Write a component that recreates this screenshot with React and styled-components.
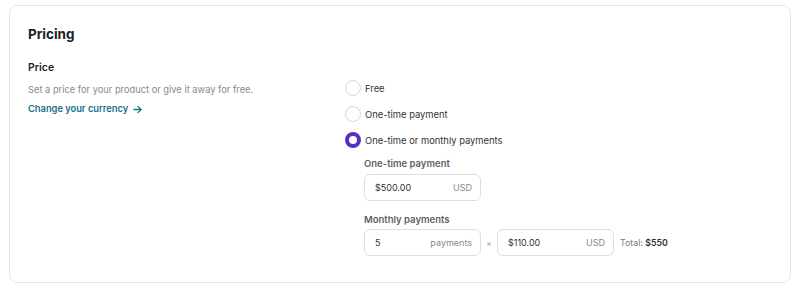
import React, { useState } from "react";
import styled, { createGlobalStyle } from "styled-components";

const GlobalStyle = createGlobalStyle`
  html, body {
    margin: 0;
    padding: 0;
    background: #fff;
    font-family: Inter, "Noto Sans", sans-serif;
    -webkit-font-smoothing: antialiased;
  }
  * { box-sizing: border-box; }
`;

// ----- Styled Components -----
const Card = styled.section`
  margin: 5px 9px 8px 9px;
  border: 1px solid #e4e4e4;
  border-radius: 8px;
  padding: 17px 18px 26px 18px;
  background: #fff;
`;

const Title = styled.h2`
  margin: 0;
  font-size: 13.5px;
  line-height: 22px;
  font-weight: 700;
  color: #1d2125;
`;

const Section = styled.div`
  margin-top: 14px;
  display: grid;
  grid-template-columns: 317px 1fr;
`;

const SectionInfo = styled.div`
  display: flex;
  flex-direction: column;
`;

const SectionTitle = styled.h3`
  margin: 0;
  font-size: 10.5px;
  line-height: 18px;
  font-weight: 600;
  color: #1d2125;
`;

const Description = styled.p`
  margin: 4px 0 0;
  font-size: 9.3px;
  line-height: 18px;
  color: #8a8a8a;
`;

const LinkRow = styled.div`
  margin-top: -3px;
`;

const Link = styled.a`
  font-size: 9.3px;
  line-height: 18px;
  font-weight: 600;
  color: #1a6e8e;
  text-decoration: none;
  display: inline-flex;
  align-items: center;
  gap: 5px;
`;

const Options = styled.div`
  margin-top: 16px;
  display: flex;
  flex-direction: column;
`;

const OptionRow = styled.label`
  display: flex;
  align-items: center;
  gap: 4px;
  height: 26px;
  flex-shrink: 0;
  font-size: 9.4px;
  color: #333;
  cursor: pointer;
`;

const Radio = styled.span`
  width: 16px;
  height: 16px;
  border-radius: 50%;
  border: ${(p) => (p.$checked ? "4px solid #5a2dc4" : "1px solid #d8d8d8")};
  background: #fff;
  flex-shrink: 0;
`;

const Nested = styled.div`
  padding-left: 19px;
  display: flex;
  flex-direction: column;
`;

const FieldLabel = styled.div`
  font-size: 9.5px;
  line-height: 14px;
  font-weight: 600;
  color: #5f5f5f;
  margin-top: ${(p) => p.$top}px;
  margin-bottom: ${(p) => p.$bottom}px;
`;

const FieldRow = styled.div`
  display: flex;
  align-items: center;
`;

const InputBox = styled.div`
  width: 117px;
  height: 27px;
  border: 1px solid #dedede;
  border-radius: 6px;
  display: flex;
  align-items: center;
  justify-content: space-between;
  padding: 0 8px 0 10px;
  font-size: 9px;
  color: #333;
`;

const Suffix = styled.span`
  color: #8a8a8a;
`;

const Times = styled.span`
  width: 16px;
  text-align: center;
  font-size: 8px;
  color: #999;
`;

const Total = styled.span`
  margin-left: 6px;
  font-size: 8.8px;
  color: #7a7a7a;

  b {
    font-weight: 600;
    color: #333;
  }
`;

const ArrowIcon = () => (
  <svg width="9" height="9" viewBox="0 0 10 10" fill="none" stroke="#1a6e8e" strokeWidth="1.4" strokeLinecap="round" strokeLinejoin="round">
    <path d="M1 5h8M5.5 1.5L9 5 5.5 8.5" />
  </svg>
);

const options = ["Free", "One-time payment", "One-time or monthly payments"];

// ----- Component -----
export default function App() {
  const [selected, setSelected] = useState(2);

  return (
    <>
      <GlobalStyle />
      <Card>
        <Title>Pricing</Title>
        <Section>
          <SectionInfo>
            <SectionTitle>Price</SectionTitle>
            <Description>Set a price for your product or give it away for free.</Description>
            <LinkRow>
              <Link href="#">
                Change your currency <ArrowIcon />
              </Link>
            </LinkRow>
          </SectionInfo>

          <Options>
            {options.map((label, i) => (
              <OptionRow key={label} onClick={() => setSelected(i)}>
                <Radio $checked={selected === i} />
                {label}
              </OptionRow>
            ))}

            <Nested>
              <FieldLabel $top={4} $bottom={3}>One-time payment</FieldLabel>
              <InputBox>
                <span>$500.00</span>
                <Suffix>USD</Suffix>
              </InputBox>

              <FieldLabel $top={12} $bottom={2}>Monthly payments</FieldLabel>
              <FieldRow>
                <InputBox>
                  <span>5</span>
                  <Suffix>payments</Suffix>
                </InputBox>
                <Times>×</Times>
                <InputBox>
                  <span>$110.00</span>
                  <Suffix>USD</Suffix>
                </InputBox>
                <Total>
                  Total: <b>$550</b>
                </Total>
              </FieldRow>
            </Nested>
          </Options>
        </Section>
      </Card>
    </>
  );
}
